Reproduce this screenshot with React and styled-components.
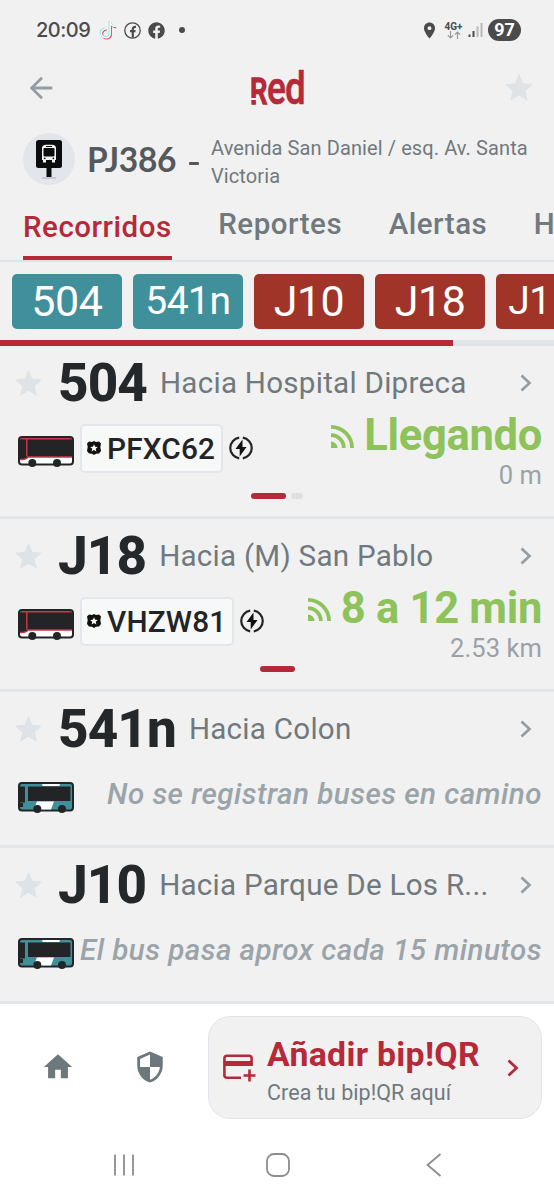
import React from 'react'
import styled, { createGlobalStyle } from 'styled-components'
import { FaFacebook } from 'react-icons/fa'
import { MdHome, MdSecurity, MdLocationOn, MdStar, MdArrowBack } from 'react-icons/md'

const chips = [
  { name: '504', color: '#40909b' },
  { name: '541n', color: '#40909b', small: true },
  { name: 'J10', color: '#a03428' },
  { name: 'J18', color: '#a03428' },
  { name: 'J1', color: '#a03428', small: true, cut: true },
]

const routes = [
  { name: '504', to: 'Hacia Hospital Dipreca', plate: 'PFXC62', time: 'Llegando', distance: '0 m', pages: 2 },
  { name: 'J18', to: 'Hacia (M) San Pablo', plate: 'VHZW81', time: '8 a 12 min', distance: '2.53 km', pages: 1 },
  { name: '541n', to: 'Hacia Colon', note: 'No se registran buses en camino' },
  { name: 'J10', to: 'Hacia Parque De Los R...', note: 'El bus pasa aprox cada 15 minutos' },
]

const RedBus = () => (
  <BusSvg viewBox="0 0 56 31">
    <rect x="1" y="1" width="54" height="27.500" rx="3" fill="#fff" stroke="#222426" strokeWidth="2" />
    <path d="M2 4q0-2 2-2h48q2 0 2 2v17H10q-1 2.500-8 2.500z" fill="#222426" />
    <path d="M3.500 2.800h49M8.800 3v17.500M2 23.500q7 0 8-2.600h44" fill="none" stroke="#c5384a" strokeWidth="1.500" />
    <circle cx="14.300" cy="27" r="4" fill="#222426" />
    <circle cx="39" cy="27" r="4" fill="#222426" />
  </BusSvg>
)

const TealBus = () => (
  <BusSvg viewBox="0 0 56 31">
    <rect x="1" y="1" width="54" height="27.500" rx="3" fill="#40909b" stroke="#222426" strokeWidth="2" />
    <path d="M2 4.500h5v16H2zM10 4.500h42.500v14.500H10z" fill="#222426" />
    <path d="M24 2h18l-.7 2H24.700z" fill="#fff" />
    <path d="M19 19.500h17l-3 8H15.500z" fill="#fff" />
    <rect x="1" y="21" width="4" height="4" fill="#222426" />
    <circle cx="19.300" cy="27" r="4" fill="#222426" />
    <circle cx="44" cy="27" r="4" fill="#222426" />
  </BusSvg>
)

const PlateBadge = () => (
  <svg width="14" height="14" viewBox="0 0 14 14">
    <path d="M7 0l2 1 3-.5L14 2.500 13.300 6l.7 4-2 2.500-3 .3L7 14l-2-1.200-3-.3L0 10l.7-4L0 2.500 2 .5 5 1z" fill="#111" />
    <path d="M7 3.200l1.100 2.500 2.700.2-2.100 1.800.7 2.700L7 9l-2.400 1.400.7-2.700-2.100-1.800 2.700-.2z" fill="#fff" />
  </svg>
)

const ElectricIcon = () => (
  <svg width="24" height="24" viewBox="0 0 24 24" fill="none">
    <path d="M13.800 1.700A10.400 10.400 0 0 1 13.800 22.300M10.200 22.300A10.400 10.400 0 0 1 10.200 1.700" stroke="#222426" strokeWidth="2.200" />
    <path d="M13.500 3.500L6.500 13h4.200v7.500L17.500 11h-4z" fill="#111" />
  </svg>
)

const StopIcon = () => (
  <svg width="28" height="40" viewBox="0 0 28 40">
    <path d="M7 39h14" stroke="#a9adb0" strokeWidth="1" />
    <path d="M11.500 26h5v12h-5z" fill="#0b0c0d" />
    <rect x="1" y="1" width="26" height="28" rx="2.500" fill="#0b0c0d" />
    <path d="M7 21V9q0-3 4-3.200h6q4 .2 4 3.200v12z" fill="#f4f4f4" />
    <rect x="8.500" y="9" width="11" height="8.500" rx="1" fill="#0b0c0d" />
    <path d="M11 7.500h6" stroke="#0b0c0d" strokeWidth="1" />
    <path d="M8 20h3v3.500H8zM17 20h3v3.500h-3z" fill="#f4f4f4" />
    <circle cx="9.700" cy="19.300" r=".9" fill="#0b0c0d" />
    <circle cx="18.300" cy="19.300" r=".9" fill="#0b0c0d" />
  </svg>
)

const SignalIcon = () => (
  <svg width="23" height="23" viewBox="0 0 23 23" fill="none" stroke="#8dc35a" strokeWidth="3.800">
    <path d="M0 1.900A21.100 21.100 0 0 1 21.100 23M0 10.200A12.800 12.800 0 0 1 12.800 23" />
    <path d="M0 16.500A6.500 6.500 0 0 1 6.500 23H0z" fill="#8dc35a" stroke="none" />
  </svg>
)

const TikTok = () => (
  <svg width="18" height="20" viewBox="0 0 18 20" fill="none" strokeWidth="1.600">
    <path d="M11.600 2v11.500a4.400 4.400 0 1 1-4.600-4.300M11.600 2.500q.8 4 5 4.400" stroke="#e8506e" transform="translate(.6 .8)" />
    <path d="M11 1.200v11.500A4.400 4.400 0 1 1 6.400 8.400M11 1.700q.8 4 5 4.400" stroke="#7fe9e4" transform="translate(-.6 -.2)" />
    <path d="M11.200 1.800v11.500a4.400 4.400 0 1 1-4.600-4.300M11.400 2.200q.8 4 5 4.400" stroke="#fff" strokeWidth="1.400" />
  </svg>
)

const FbOutline = () => (
  <svg width="17" height="17" viewBox="0 0 17 17" fill="none" stroke="#4b4b4b">
    <circle cx="8.500" cy="8.500" r="7.700" strokeWidth="1.300" />
    <path d="M8.800 15.500V7.200q0-2.500 3.200-2.200M6 9.200h5.500" strokeWidth="2.200" />
  </svg>
)

const Arrow = ({ color = '#959da2' }) => (
  <ArrowSvg viewBox="0 0 12 18">
    <path d="M1.500 1.500L9.500 9l-8 7.500" fill="none" stroke={color} strokeWidth="2.700" />
  </ArrowSvg>
)

const Route = ({ route }) => (
  <RouteRow $tall={!!route.plate}>
    <RouteHead>
      <StarSlot><MdStar size={33} /></StarSlot>
      <RouteName>{route.name}</RouteName>
      <RouteTo>{route.to}</RouteTo>
      <Arrow />
    </RouteHead>
    <Detail>
      <BusSlot>{route.plate ? <RedBus /> : <TealBus />}</BusSlot>
      {route.plate ? (
        <>
          <Plate><PlateBadge />{route.plate}</Plate>
          <ElectricSlot><ElectricIcon /></ElectricSlot>
          <Arrival>
            <Time><SignalIcon />{route.time}</Time>
            <Distance>{route.distance}</Distance>
          </Arrival>
        </>
      ) : (
        <Note>{route.note}</Note>
      )}
    </Detail>
    {route.pages && (
      <Pager>
        <Dot $active />
        {route.pages > 1 && <Dot />}
      </Pager>
    )}
  </RouteRow>
)

const App = () => {
  return (
    <Layout>
      <GlobalStyle />
      <StatusBar>
        <Clock>20:09</Clock>
        <StatusIcons>
          <TikTok />
          <FbOutline />
          <FaFacebook size={17} />
          <MoreDot />
        </StatusIcons>
        <StatusRight>
          <PinIcon size={19} />
          <Network>
            4G+
            <svg width="14" height="8" viewBox="0 0 14 8" fill="none" stroke="#9b9b9b" strokeWidth="1.200">
              <path d="M3.500 0v7M.8 4.300l2.700 2.700 2.700-2.700M10.500 8V1M7.800 3.700L10.500 1l2.700 2.700" />
            </svg>
          </Network>
          <svg width="15" height="16" viewBox="0 0 15 16">
            <path d="M.5 12.500h2v2.500h-2zM4.500 9h2v6h-2z" fill="#4b4b4b" />
            <path d="M8.500 4.500h2V15h-2zM12.500 1h2v14h-2z" fill="#b9b9b9" />
          </svg>
          <Battery>97</Battery>
        </StatusRight>
      </StatusBar>

      <Header>
        <MdArrowBack size={34} color="#959da2" />
        <Logo><LogoR>R</LogoR><LogoE>e</LogoE><LogoD>d</LogoD></Logo>
        <MdStar size={34} color="#dee3e7" />
      </Header>

      <Stop>
        <StopCircle><StopIcon /></StopCircle>
        <StopCode>PJ386</StopCode>
        <Dash />
        <Address>Avenida San Daniel / esq. Av. Santa Victoria</Address>
      </Stop>

      <Tabs>
        <Tab $active>Recorridos</Tab>
        <Tab>Reportes</Tab>
        <Tab>Alertas</Tab>
        <Tab>H</Tab>
      </Tabs>

      <Chips>
        {chips.map((chip) => (
          <Chip key={chip.name} $color={chip.color} $small={chip.small} $cut={chip.cut}>{chip.name}</Chip>
        ))}
      </Chips>
      <Progress><ProgressFill /></Progress>

      {routes.map((route) => (
        <Route key={route.name} route={route} />
      ))}

      <BottomBar>
        <NavIcon $width={115}><MdHome size={34} /></NavIcon>
        <NavIcon $width={69}><MdSecurity size={34} /></NavIcon>
        <QrCard>
          <svg width="34" height="28" viewBox="0 0 34 28" fill="none" stroke="#b52938" strokeWidth="2.600">
            <path d="M18 23.800H4q-2.600 0-2.600-2.600V4.400q0-2.600 2.600-2.600h22q2.600 0 2.600 2.600V12" />
            <path d="M1.500 9.500h27" strokeWidth="5" />
            <path d="M26.500 15.500v12M20.500 21.500h12" strokeWidth="2.600" />
          </svg>
          <QrText>
            <QrTitle>Añadir bip!QR</QrTitle>
            <QrSub>Crea tu bip!QR aquí</QrSub>
          </QrText>
          <Arrow color="#b52938" />
        </QrCard>
      </BottomBar>

      <SystemNav>
        <svg width="20" height="24" viewBox="0 0 20 24" stroke="#8c8c8c" strokeWidth="1.800">
          <path d="M1 1.500v21M10 1.500v21M19 1.500v21" />
        </svg>
        <HomeKey viewBox="0 0 24 24" fill="none" stroke="#8c8c8c" strokeWidth="1.800">
          <rect x="1" y="1" width="22" height="22" rx="7" />
        </HomeKey>
        <svg width="16" height="24" viewBox="0 0 16 24" fill="none" stroke="#8c8c8c" strokeWidth="1.800">
          <path d="M14.500 1L1.500 12l13 11" />
        </svg>
      </SystemNav>
    </Layout>
  )
}

export default App

const GlobalStyle = createGlobalStyle`
  body {
    margin: 0;
    overflow: hidden;
    background: #f1f1f1;
  }
  * {
    box-sizing: border-box;
  }
  svg {
    display: block;
    flex-shrink: 0;
  }
`

const Layout = styled.div`
  width: 554px;
  height: 1200px;
  overflow: hidden;
  display: flex;
  flex-direction: column;
  background: #f1f1f1;
  font-family: Roboto, sans-serif;
  white-space: nowrap;
`

const StatusBar = styled.div`
  height: 60px;
  padding: 0 33px 0 36px;
  display: flex;
  align-items: center;
  color: #4b4b4b;
`

const Clock = styled.div`
  width: 63px;
  font-family: Inter, sans-serif;
  font-size: 20px;
  font-weight: 500;
  letter-spacing: -0.5px;
`

const StatusIcons = styled.div`
  display: flex;
  align-items: center;
  gap: 7px;
`

const MoreDot = styled.div`
  width: 6px;
  height: 6px;
  margin-left: 7px;
  border-radius: 50%;
  background: #4b4b4b;
`

const StatusRight = styled.div`
  margin-left: auto;
  display: flex;
  align-items: center;
  gap: 5px;
`

const PinIcon = styled(MdLocationOn)`
  margin-right: 1px;
`

const Network = styled.div`
  width: 17px;
  margin-right: 1px;
  display: flex;
  flex-direction: column;
  align-items: center;
  font-size: 10px;
  font-weight: 700;
  line-height: 9px;
`

const Battery = styled.div`
  width: 33px;
  height: 22px;
  border-radius: 11px;
  background: #4b4b4b;
  color: #fff;
  font-size: 18px;
  font-weight: 700;
  line-height: 22px;
  text-align: center;
`

const Header = styled.div`
  height: 56px;
  padding: 0 18px 0 24px;
  display: flex;
  align-items: center;
  justify-content: space-between;
`

const Logo = styled.div`
  display: flex;
  align-items: baseline;
  height: 50px;
  margin-right: 5px;
  line-height: 50px;
  color: #b52938;
`

const Letter = styled.span`
  display: block;
  font-family: Roboto, sans-serif;
  font-weight: 500;
  transform-origin: left;
`

/* the left leg of the R ends in a separate dot */
const LogoR = styled(Letter)`
  position: relative;
  width: 17px;
  font-size: 37px;
  -webkit-text-stroke: 1.500px #b52938;
  transform: scaleX(0.74);

  &::after {
    content: '';
    position: absolute;
    left: 0;
    bottom: 17.500px;
    width: 9px;
    height: 1.500px;
    background: #f1f1f1;
  }
`

const LogoE = styled(Letter)`
  width: 18.500px;
  font-size: 46px;
  -webkit-text-stroke: 0.6px #b52938;
  transform: scaleX(0.77);
`

const LogoD = styled(Letter)`
  width: 20.500px;
  font-size: 46px;
  -webkit-text-stroke: 0.6px #b52938;
  transform: scaleX(0.8);
`

const Stop = styled.div`
  height: 86px;
  padding: 0 8px 0 23px;
  display: flex;
  align-items: center;
`

const StopCircle = styled.div`
  width: 52px;
  height: 52px;
  flex-shrink: 0;
  border-radius: 50%;
  background: #e2e6eb;
  display: flex;
  align-items: center;
  justify-content: center;
`

const StopCode = styled.div`
  width: 102px;
  flex-shrink: 0;
  margin-left: 12px;
  font-family: Lato, sans-serif;
  font-size: 33.500px;
  font-weight: 700;
  letter-spacing: -0.3px;
  color: #55595c;
`

const Dash = styled.div`
  width: 10px;
  height: 3px;
  flex-shrink: 0;
  margin: 8px 12px 0 0;
  border-radius: 1px;
  background: #55595c;
`

const Address = styled.div`
  flex: 1;
  padding-top: 6px;
  font-size: 20px;
  line-height: 28.500px;
  letter-spacing: 0.1px;
  white-space: normal;
  color: #70797e;
`

const Tabs = styled.div`
  height: 60px;
  padding-left: 23px;
  display: flex;
  align-items: flex-end;
  gap: 46.500px;
  border-bottom: 2px solid #e1e5ea;
`

const Tab = styled.div`
  height: ${(props) => (props.$active ? '54px' : '57px')};
  font-size: 29.500px;
  font-weight: 500;
  line-height: 43px;
  letter-spacing: 0.53px;
  color: ${(props) => (props.$active ? '#b52938' : '#70797e')};
  border-bottom: ${(props) => (props.$active ? '4px solid #b52938' : 'none')};
  border-radius: 3px 3px 0 0;
`

const Chips = styled.div`
  height: 78px;
  padding: 12px 0 0 12px;
  display: flex;
  gap: 11.400px;
`

const Chip = styled.div`
  flex: 0 0 109.700px;
  height: 55px;
  padding-left: ${(props) => (props.$cut ? '12px' : '0')};
  border-radius: 5px;
  background: ${(props) => props.$color};
  color: #fff;
  font-size: ${(props) => (props.$small ? '39px' : '43px')};
  letter-spacing: -0.5px;
  line-height: 54px;
  text-align: ${(props) => (props.$cut ? 'left' : 'center')};
`

const Progress = styled.div`
  height: 6px;
  background: #e1e5ea;
`

const ProgressFill = styled.div`
  width: 452.500px;
  height: 6px;
  background: #b52938;
`

const RouteRow = styled.div`
  height: ${(props) => (props.$tall ? '173px' : '156px')};
  padding-top: 3px;
  border-bottom: 3px solid #e1e5ea;
`

const RouteHead = styled.div`
  height: 68px;
  padding-right: 22px;
  display: flex;
  align-items: center;
`

const StarSlot = styled.div`
  width: 58px;
  padding-left: 12px;
  color: #dee3e7;
`

const RouteName = styled.div`
  font-size: 53px;
  font-weight: 800;
  letter-spacing: -0.9px;
  color: #25282a;
`

const RouteTo = styled.div`
  margin-left: 13px;
  font-size: 29.600px;
  letter-spacing: 0.25px;
  color: #70797e;
`

const ArrowSvg = styled.svg`
  width: 12px;
  height: 18px;
  margin-left: auto;
`

const Detail = styled.div`
  height: 72px;
  padding: 0 12px 0 18px;
  display: flex;
  align-items: flex-start;
`

const BusSlot = styled.div`
  width: 62px;
  flex-shrink: 0;
  padding-top: 19px;
`

const BusSvg = styled.svg`
  width: 56px;
  height: 31px;
`

const Plate = styled.div`
  height: 49px;
  margin-top: 6.500px;
  padding: 0 6px 0 5px;
  display: flex;
  align-items: center;
  gap: 6px;
  border: 2px solid #e3e7eb;
  border-radius: 5px;
  background: #f7f8f8;
  color: #222426;
  font-size: 29.800px;
  font-weight: 500;
  letter-spacing: 0.15px;
`

const ElectricSlot = styled.div`
  margin: 19px 0 0 6px;
`

const Arrival = styled.div`
  margin-left: auto;
  display: flex;
  flex-direction: column;
  align-items: flex-end;
`

const Time = styled.div`
  padding-top: 1px;
  display: flex;
  align-items: center;
  gap: 10px;
  font-size: 43.500px;
  font-weight: 700;
  letter-spacing: -0.3px;
  line-height: 36px;
  color: #8dc35a;
`

const Distance = styled.div`
  font-size: 25.500px;
  line-height: 42px;
  letter-spacing: 0.1px;
  color: #9aa2a7;
`

const Note = styled.div`
  flex: 1;
  margin-top: 7px;
  font-size: 29.600px;
  font-weight: 500;
  font-style: italic;
  line-height: 48px;
  letter-spacing: 0.45px;
  text-align: right;
  color: #9aa4a9;
`

const Pager = styled.div`
  height: 14px;
  padding-top: 3.500px;
  display: flex;
  justify-content: center;
  gap: 5px;
`

const Dot = styled.div`
  width: ${(props) => (props.$active ? '35px' : '12px')};
  height: 6px;
  border-radius: 3px;
  background: ${(props) => (props.$active ? '#b52938' : '#dfe0e1')};
`

const BottomBar = styled.div`
  height: 126px;
  padding-right: 12px;
  display: flex;
  background: #fff;
`

const NavIcon = styled.div`
  width: ${(props) => props.$width}px;
  display: flex;
  align-items: center;
  justify-content: center;
  color: #6d787d;
`

const QrCard = styled.div`
  width: 334px;
  height: 103px;
  margin: 12px 0 0 auto;
  padding: 0 22px 0 14px;
  display: flex;
  align-items: center;
  border: 1.500px solid #e1e5ea;
  border-radius: 22px;
  background: #f1f1f1;
`

const QrText = styled.div`
  margin-left: 10px;
  padding-top: 9px;
`

const QrTitle = styled.div`
  font-size: 33.800px;
  font-weight: 700;
  line-height: 40px;
  letter-spacing: 0.3px;
  color: #b52938;
`

const QrSub = styled.div`
  font-size: 21.500px;
  line-height: 35px;
  letter-spacing: 0.05px;
  color: #70797e;
`

const SystemNav = styled.div`
  height: 70px;
  padding: 0 112px 0 114px;
  display: flex;
  align-items: center;
  justify-content: space-between;
  background: #fff;
`

const HomeKey = styled.svg`
  width: 24px;
  height: 24px;
  margin-right: 4px;
`
